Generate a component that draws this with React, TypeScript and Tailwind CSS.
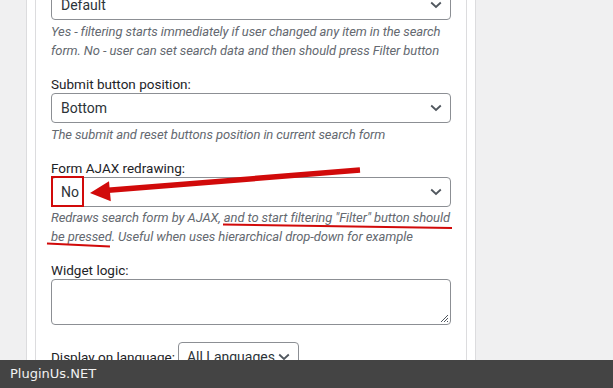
import React from "react";

function Chevron({ className = "" }: { className?: string }) {
  return (
    <svg width="12" height="8" viewBox="0 0 12 8" className={className}>
      <path d="M1.2 1.5 L6 6 L10.8 1.5" fill="none" stroke="#50575e" strokeWidth="1.8" />
    </svg>
  );
}

function Select({ value }: { value: string }) {
  return (
    <div className="flex h-[30px] w-[400px] items-center justify-between rounded-[4px] border border-[#8c8f94] bg-white pl-[9px] pr-[8px] text-[14px] text-[#2c3338]">
      <span>{value}</span>
      <Chevron />
    </div>
  );
}

function Desc({ lines, className = "" }: { lines: string[]; className?: string }) {
  return (
    <p className={"text-[13px] italic leading-[19px] tracking-[-0.1px] text-[#646970] " + className}>
      {lines.map((l, i) => (
        <span key={i} className="block whitespace-nowrap">
          {l}
        </span>
      ))}
    </p>
  );
}

export default function App() {
  return (
    <div
      className="relative h-[388px] w-[613px] overflow-hidden bg-[#f0f0f1]"
      style={{ fontFamily: 'Roboto, "Noto Sans", sans-serif' }}
    >
      <div className="ml-[26px] h-full w-[450px] border-x border-[#dcdcde] bg-white px-[8px]">
        <div className="h-full border-x border-[#dcdcde] px-[15px]">
          <div className="-mt-[10px] flex flex-col">
            <Select value="Default" />
            <Desc
              className="mt-[2px]"
              lines={[
                "Yes - filtering starts immediately if user changed any item in the search",
                "form. No - user can set search data and then should press Filter button",
              ]}
            />

            <label className="mt-[15px] text-[13.5px] leading-[18px] text-[#1d2327]">Submit button position:</label>
            <Select value="Bottom" />
            <Desc className="mt-[2px]" lines={["The submit and reset buttons position in current search form"]} />

            <label className="mt-[15px] text-[13.5px] leading-[18px] text-[#1d2327]">Form AJAX redrawing:</label>
            <Select value="No" />
            <Desc
              className="mt-[1px]"
              lines={[
                'Redraws search form by AJAX, and to start filtering "Filter" button should',
                "be pressed. Useful when uses hierarchical drop-down for example",
              ]}
            />

            <label className="mt-[15px] text-[13.5px] leading-[18px] text-[#1d2327]">Widget logic:</label>
            <div className="relative h-[46px] w-[400px] rounded-[4px] border border-[#8c8f94] bg-white">
              <svg width="9" height="9" viewBox="0 0 9 9" className="absolute bottom-[1px] right-[1px]">
                <path d="M8 1 L1 8 M8 4 L4 8 M8 7 L7 8" stroke="#50575e" strokeWidth="1" />
              </svg>
            </div>

            <div className="mt-[17px] flex items-center gap-[3px]">
              <span className="pt-[1px] text-[13.5px] text-[#1d2327]">Display on language:</span>
              <div className="flex h-[30px] w-[121px] items-center justify-between rounded-[4px] border border-[#8c8f94] bg-white pl-[8px] pr-[8px] text-[14px] text-[#2c3338]">
                <span>All Languages</span>
                <Chevron />
              </div>
            </div>
          </div>
        </div>
      </div>

      <svg className="pointer-events-none absolute left-0 top-0" width="613" height="388" viewBox="0 0 613 388">
        <rect x="52" y="177" width="31" height="29" fill="none" stroke="#d10a0a" strokeWidth="2" />
        <line x1="360" y1="170" x2="105" y2="190.6" stroke="#d10a0a" strokeWidth="5.5" />
        <polygon points="90,193 109,181.3 110.8,201.3" fill="#d10a0a" />
        <line x1="223" y1="224.5" x2="452" y2="228" stroke="#d10a0a" strokeWidth="2" />
        <line x1="47" y1="243.5" x2="110" y2="246.5" stroke="#d10a0a" strokeWidth="2" />
      </svg>

      <div
        className="absolute bottom-0 left-0 flex h-[28px] w-full items-center bg-[#444444] pl-[10px] text-[13px] text-[#f2f2f2]"
        style={{ fontFamily: '"DejaVu Sans", sans-serif' }}
      >
        PluginUs.NET
      </div>
    </div>
  );
}
